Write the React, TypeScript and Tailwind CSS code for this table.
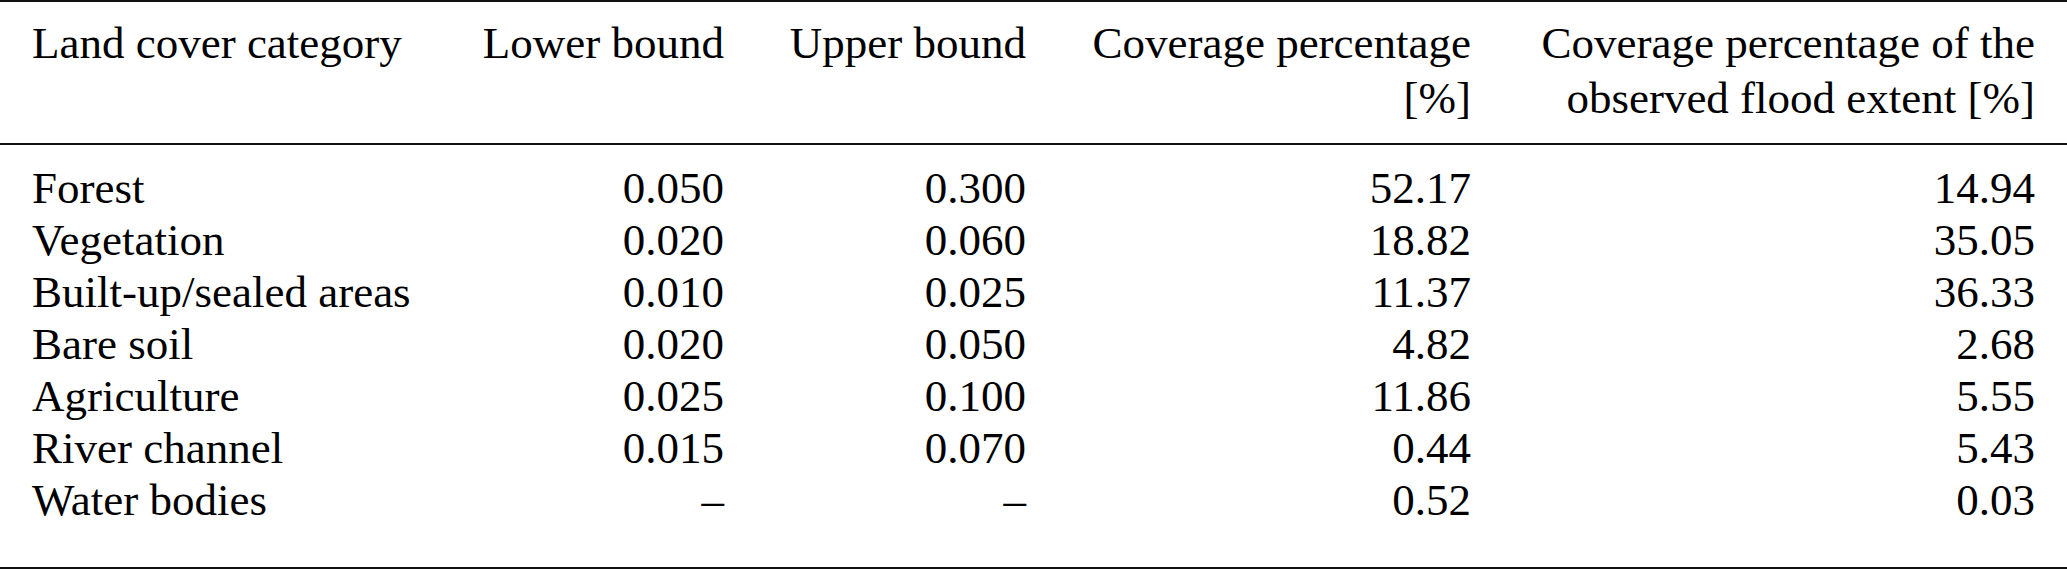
import React from "react";

const rows = [
  ["Forest", "0.050", "0.300", "52.17", "14.94"],
  ["Vegetation", "0.020", "0.060", "18.82", "35.05"],
  ["Built-up/sealed areas", "0.010", "0.025", "11.37", "36.33"],
  ["Bare soil", "0.020", "0.050", "4.82", "2.68"],
  ["Agriculture", "0.025", "0.100", "11.86", "5.55"],
  ["River channel", "0.015", "0.070", "0.44", "5.43"],
  ["Water bodies", "–", "–", "0.52", "0.03"],
];

const cols = "grid grid-cols-[448px_244px_302px_445px_564px] px-8";

const App = () => {
  return (
    <div className="w-[2067px] h-[570px] bg-white text-black text-[45px] font-['Liberation_Serif']">
      <div className="border-t-2 border-[#111]" />
      <div className={`${cols} pt-[14px] pb-[17px] leading-[55px]`}>
        <div className="whitespace-nowrap">Land cover category</div>
        <div className="text-right whitespace-nowrap">Lower bound</div>
        <div className="text-right whitespace-nowrap">Upper bound</div>
        <div className="text-right whitespace-nowrap">
          Coverage percentage
          <br />
          [%]
        </div>
        <div className="text-right whitespace-nowrap">
          Coverage percentage of the
          <br />
          observed flood extent [%]
        </div>
      </div>
      <div className="border-t-2 border-[#111]" />
      <div className="pt-[17px] pb-[41px] leading-[52px]">
        {rows.map((r) => (
          <div key={r[0]} className={cols}>
            <div className="whitespace-nowrap">{r[0]}</div>
            <div className="text-right">{r[1]}</div>
            <div className="text-right">{r[2]}</div>
            <div className="text-right">{r[3]}</div>
            <div className="text-right">{r[4]}</div>
          </div>
        ))}
      </div>
      <div className="border-t-2 border-[#111]" />
    </div>
  );
};

export default App;
